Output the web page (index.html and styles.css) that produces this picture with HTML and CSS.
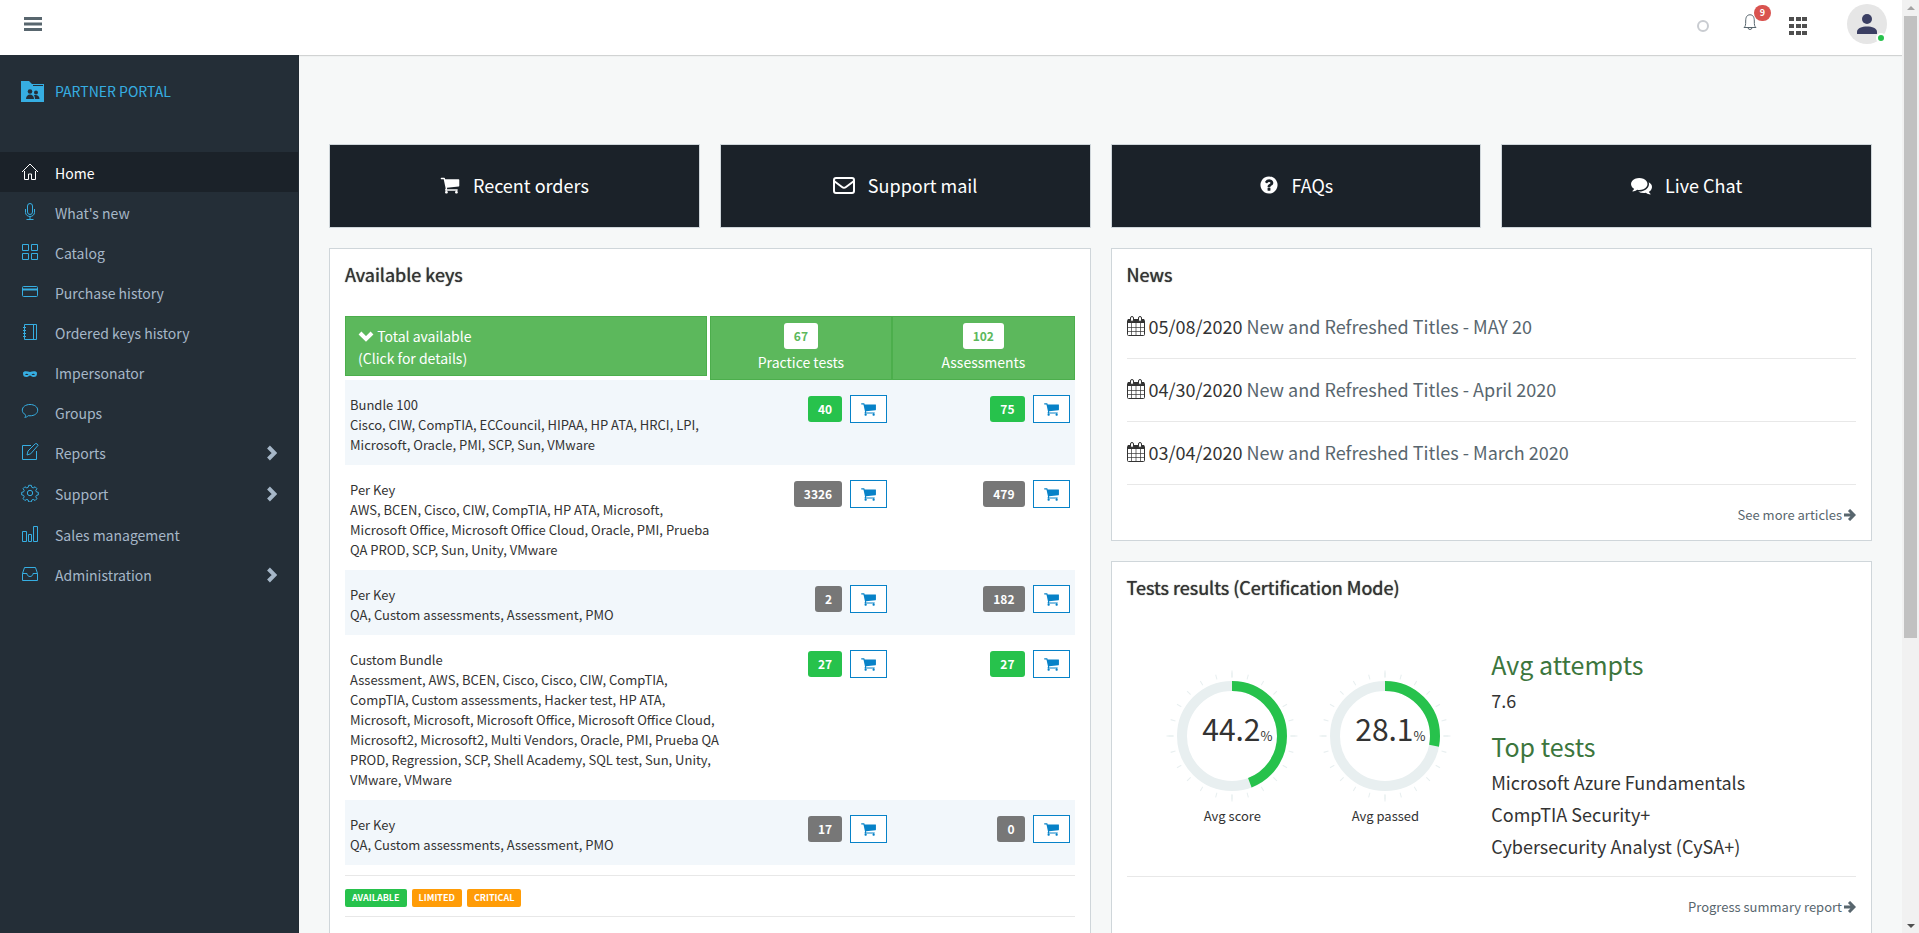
FILE: index.html
```html
<!DOCTYPE html>
<html lang="en">

<head>
    <meta charset="UTF-8">
    <meta name="viewport" content="width=device-width, initial-scale=1.0">
    <title>Partner Portal</title>
    <link rel="stylesheet" href="styles.css">
</head>

<body>
    <!-- shared icons -->
    <svg class="sprite" aria-hidden="true">
        <symbol id="cart" viewBox="0 0 1664 1792">
            <path d="M640 1536q0 52-38 90t-90 38-90-38-38-90 38-90 90-38 90 38 38 90zm896 0q0 52-38 90t-90 38-90-38-38-90 38-90 90-38 90 38 38 90zm128-1088v512q0 24-16.5 42.5t-40.5 21.5l-1044 122q13 60 13 70 0 16-24 64h920q26 0 45 19t19 45-19 45-45 19h-1024q-26 0-45-19t-19-45q0-11 8-31.5t16-36 21.5-40 15.5-29.5l-177-823h-204q-26 0-45-19t-19-45 19-45 45-19h256q16 0 28.5 6.5t19.5 15.5 13 24.5 8 26 5.5 29.5 4.5 26h1201q26 0 45 19t19 45z" />
        </symbol>
        <symbol id="calendar" viewBox="0 0 18 20">
            <path d="M1 3h16v4H1z" />
            <path d="M.5 4.500q0-1 1-1h15q1 0 1 1v14q0 1-1 1h-15q-1 0-1-1z" fill="none" stroke="currentColor" />
            <path d="M4.500 7v12M9 7v12M13.500 7v12M1 11.500h16M1 15.500h16" fill="none" stroke="currentColor" stroke-width=".7" />
            <rect x="3.500" y=".5" width="3" height="5" rx="1.500" fill="#fff" stroke="currentColor" />
            <rect x="11.500" y=".5" width="3" height="5" rx="1.500" fill="#fff" stroke="currentColor" />
        </symbol>
        <symbol id="chevron" viewBox="0 0 10 16">
            <path d="M1.500 2l6 6-6 6" fill="none" stroke="currentColor" stroke-width="4" />
        </symbol>
        <symbol id="arrow" viewBox="0 0 12 12">
            <path d="M0 6h10M5 1l5 5-5 5" fill="none" stroke="currentColor" stroke-width="3" />
        </symbol>
    </svg>

    <div class="app">
        <header class="topbar">
            <button class="icon-btn" aria-label="Toggle menu">
                <svg width="18" height="14" viewBox="0 0 18 14"><path d="M0 0h18v3H0zm0 5.500h18v3H0zM0 11h18v3H0z" fill="#58666e" /></svg>
            </button>
            <div class="topbar-right">
                <span class="status-ring"></span>
                <button class="icon-btn bell" aria-label="Notifications">
                    <svg width="14" height="16" viewBox="0 0 14 16" fill="none" stroke="#58666e"><path d="M1 13.500c1.500-1.200 1.700-2.500 1.700-6.500C2.700 3 4 .8 7 .8S11.300 3 11.300 7c0 4 .2 5.300 1.700 6.500zM5 13.500a2 2 0 0 0 4 0" /></svg>
                    <span class="count">9</span>
                </button>
                <button class="icon-btn apps" aria-label="Applications">
                    <svg width="18" height="18" viewBox="0 0 18 18" fill="#4f4f4f"><path d="M0 0h5v4H0zM7 0h5v4H7zM13 0h5v4h-5zM0 7h5v4H0zM7 7h5v4H7zM13 7h5v4h-5zM0 14h5v4H0zM7 14h5v4H7zM13 14h5v4h-5z" /></svg>
                </button>
                <button class="icon-btn avatar" aria-label="Account">
                    <svg width="40" height="40" viewBox="0 0 40 40"><circle cx="20" cy="20" r="20" fill="#e6e6e6" /><circle cx="20" cy="15" r="5" fill="#3b3f63" /><path d="M10 30v-2c0-4 5-5.500 10-5.500s10 1.500 10 5.500v2z" fill="#3b3f63" /></svg>
                    <span class="online"></span>
                </button>
            </div>
        </header>

        <div class="page">
            <nav class="sidebar">
                <a class="brand" href="#">
                    <svg width="23" height="21" viewBox="0 0 23 21"><path d="M0 0h8l3 3h12v18H0z" fill="#36aee2" /><path d="M12 4h10v1H12z" fill="#242e37" /><g fill="#242e37"><circle cx="9" cy="10.500" r="2.300" /><circle cx="15" cy="11.500" r="2" /><path d="M5 18c0-3 2-4.500 4-4.500s4 1.500 4 4.500zM14 18c0-1.800-.5-3-1.200-3.700 2.600-1.200 5.700.3 5.700 3.700z" /></g></svg>
                    PARTNER PORTAL
                </a>
                <ul class="menu">
                    <li class="active"><a href="#"><svg class="ico" viewBox="0 0 18 18"><path d="M1 9l8-8 8 8M3.500 8v8.500h4V11h3v5.500h4V8" /></svg>Home</a></li>
                    <li><a href="#"><svg class="ico" viewBox="0 0 18 18"><rect x="6.500" y=".5" width="5" height="11" rx="2.500" /><path d="M4.500 6v3.500a4.500 4 0 0 0 9 0V6M9 13.500v3M5.500 16.500h7" /></svg>What's new</a></li>
                    <li><a href="#"><svg class="ico" viewBox="0 0 18 18"><path d="M1.500 1.500h6v6h-6zM10.500 1.500h6v6h-6zM1.500 10.500h6v6h-6zM10.500 10.500h6v6h-6z" /></svg>Catalog</a></li>
                    <li><a href="#"><svg class="ico" viewBox="0 0 18 18"><rect x="1.500" y="3.500" width="15" height="10" rx="1" /><path d="M1.500 6.500h15" stroke-width="2" /></svg>Purchase history</a></li>
                    <li><a href="#"><svg class="ico" viewBox="0 0 18 18"><path d="M3.500 1.500h12v15h-12zM12.500 1.500v15M2 4.500h3M2 7.500h3M2 10.500h3M2 13.500h3" /></svg>Ordered keys history</a></li>
                    <li><a href="#"><svg class="ico" viewBox="0 0 18 18"><path d="M2 10c0-2 4-2 7-1 3-1 7-1 7 1 0 3-1 4-3.500 4-2 0-2.500-1.500-3.500-1.500S7.500 14 5.500 14C3 14 2 13 2 10z" fill="#36aee2" stroke="none" /><path d="M4 11.500q1.500-1.500 3.500 0-1.500 1-3.500 0zM10.500 11.500q2-1.500 3.500 0-2 1-3.500 0z" fill="#242e37" stroke="none" /></svg>Impersonator</a></li>
                    <li><a href="#"><svg class="ico" viewBox="0 0 18 18"><path d="M4.500 11.800C2.500 10.700 1.300 9 1.300 7.200c0-3.400 3.400-5.700 7.700-5.700s7.700 2.300 7.700 5.700-3.400 5.600-7.700 5.600c-.6 0-1.200 0-1.800-.1C6 13.900 5 14.300 3.800 14.400c.7-.8 1-1.700.7-2.600z" /></svg>Groups</a></li>
                    <li class="has-sub"><a href="#"><svg class="ico" viewBox="0 0 18 18"><path d="M10 2.500H1.500v14h14V8M6 12l1-4 7.300-7.300q2-.7 2.800 1.600L9.700 10.800z" /></svg>Reports<svg class="chev"><use href="#chevron" /></svg></a></li>
                    <li class="has-sub"><a href="#"><svg class="ico" viewBox="0 0 18 18"><circle cx="9" cy="9" r="2.700" /><path d="M7.700 1.300h2.600l.5 2 1.400.6 1.900-1.100 1.800 1.800-1.100 1.900.6 1.400 1.900.4v2.600l-1.900.5-.6 1.400 1.100 1.900-1.800 1.800-1.900-1.100-1.400.6-.5 1.900H7.700l-.5-1.900-1.400-.6-1.900 1.100-1.800-1.800 1.100-1.900-.6-1.400-1.900-.5V8.300l1.900-.4.600-1.400-1.100-1.900 1.800-1.800 1.900 1.100 1.400-.6z" /></svg>Support<svg class="chev"><use href="#chevron" /></svg></a></li>
                    <li><a href="#"><svg class="ico" viewBox="0 0 18 18"><path d="M1.500 6.500h4v10h-4zM7.500 9.500h3v7h-3zM12.500 1.500h4v15h-4z" /></svg>Sales management</a></li>
                    <li class="has-sub"><a href="#"><svg class="ico" viewBox="0 0 18 18"><path d="M3.500 2.500h11l2 6v7h-15v-7zM1.500 8.500h4.500c0 4 6 4 6 0h4.500" /></svg>Administration<svg class="chev"><use href="#chevron" /></svg></a></li>
                </ul>
            </nav>

            <main class="content">
                <div class="tiles">
                    <a class="tile" href="#"><svg width="20" height="20"><use href="#cart" /></svg>Recent orders</a>
                    <a class="tile" href="#"><svg width="22" height="18" viewBox="0 0 22 18" fill="none" stroke="#fff" stroke-width="2"><rect x="1" y="2" width="20" height="15" rx="2" /><path d="M1 5l8 6q2 1.500 4 0l8-6" /></svg>Support mail</a>
                    <a class="tile" href="#"><svg width="20" height="20" viewBox="0 0 1792 1792"><path d="M1024 1376v-192q0-14-9-23t-23-9h-192q-14 0-23 9t-9 23v192q0 14 9 23t23 9h192q14 0 23-9t9-23zm256-672q0-88-55.500-163t-138.500-116-170-41q-243 0-371 213-15 24 8 42l132 100q7 6 19 6 16 0 25-12 53-68 86-92 34-24 86-24 48 0 85.500 26t37.500 59q0 38-20 61t-68 45q-63 28-115.500 86.500t-52.500 125.500v36q0 14 9 23t23 9h192q14 0 23-9t9-23q0-19 21.500-49.500t54.500-49.500q32-18 49-28.500t46-35 44.500-48 28-60.500 12.500-81zm384 192q0 209-103 385.500t-279.500 279.500-385.500 103-385.500-103-279.500-279.500-103-385.500 103-385.500 279.500-279.500 385.500-103 385.500 103 279.500 279.500 103 385.500z" /></svg>FAQs</a>
                    <a class="tile" href="#"><svg width="21" height="21" viewBox="0 0 1792 1792"><path d="M1408 768q0 139-94 257t-256.500 186.500-353.500 68.500q-86 0-176-16-124 88-278 128-36 9-86 16h-3q-11 0-20.500-8t-11.500-21q-1-3-1-6.500t.5-6.500 2-6l2.500-5 3.500-5.500 4-5 4.500-5 4-4.500q5-6 23-25t26-29.500 22.500-29 25-38.500 20.500-44q-124-72-195-177t-71-224q0-139 94-257t256.500-186.500 353.500-68.500 353.500 68.500 256.500 186.500 94 257zm384 256q0 120-71 224.500t-195 176.500q10 24 20.500 44t25 38.500 22.500 29 26 29.500 23 25q1 1 4 4.500t4.500 5 4 5 3.500 5.500l2.500 5 2 6 .5 6.500-1 6.500q-3 14-13 22t-22 7q-50-7-86-16-154-40-278-128-90 16-176 16-271 0-472-132 58 4 88 4 161 0 309-45t264-129q125-92 192-212t67-254q0-77-23-152 129 71 204 178t75 230z" /></svg>Live Chat</a>
                </div>

                <div class="panels">
                    <section class="panel keys">
                        <h2>Available keys</h2>
                        <table class="keys-table">
                            <thead>
                                <tr>
                                    <th class="total"><button><svg class="down" width="16" height="11" viewBox="0 0 16 11"><path d="M2 2l6 6 6-6" fill="none" stroke="#fff" stroke-width="4" /></svg> Total available<br>(Click for details)</button></th>
                                    <th><button><span class="badge white">67</span>Practice tests</button></th>
                                    <th><button><span class="badge white">102</span>Assessments</button></th>
                                </tr>
                            </thead>
                            <tbody>
                                <tr>
                                    <td>Bundle 100<br>Cisco, CIW, CompTIA, ECCouncil, HIPAA, HP ATA, HRCI, LPI,<br>Microsoft, Oracle, PMI, SCP, Sun, VMware</td>
                                    <td><div class="stock"><span class="badge green">40</span><button class="buy" aria-label="Buy"><svg><use href="#cart" /></svg></button></div></td>
                                    <td><div class="stock"><span class="badge green">75</span><button class="buy" aria-label="Buy"><svg><use href="#cart" /></svg></button></div></td>
                                </tr>
                                <tr>
                                    <td>Per Key<br>AWS, BCEN, Cisco, CIW, CompTIA, HP ATA, Microsoft,<br>Microsoft Office, Microsoft Office Cloud, Oracle, PMI, Prueba<br>QA PROD, SCP, Sun, Unity, VMware</td>
                                    <td><div class="stock"><span class="badge">3326</span><button class="buy" aria-label="Buy"><svg><use href="#cart" /></svg></button></div></td>
                                    <td><div class="stock"><span class="badge">479</span><button class="buy" aria-label="Buy"><svg><use href="#cart" /></svg></button></div></td>
                                </tr>
                                <tr>
                                    <td>Per Key<br>QA, Custom assessments, Assessment, PMO</td>
                                    <td><div class="stock"><span class="badge">2</span><button class="buy" aria-label="Buy"><svg><use href="#cart" /></svg></button></div></td>
                                    <td><div class="stock"><span class="badge">182</span><button class="buy" aria-label="Buy"><svg><use href="#cart" /></svg></button></div></td>
                                </tr>
                                <tr>
                                    <td>Custom Bundle<br>Assessment, AWS, BCEN, Cisco, Cisco, CIW, CompTIA,<br>CompTIA, Custom assessments, Hacker test, HP ATA,<br>Microsoft, Microsoft, Microsoft Office, Microsoft Office Cloud,<br>Microsoft2, Microsoft2, Multi Vendors, Oracle, PMI, Prueba QA<br>PROD, Regression, SCP, Shell Academy, SQL test, Sun, Unity,<br>VMware, VMware</td>
                                    <td><div class="stock"><span class="badge green">27</span><button class="buy" aria-label="Buy"><svg><use href="#cart" /></svg></button></div></td>
                                    <td><div class="stock"><span class="badge green">27</span><button class="buy" aria-label="Buy"><svg><use href="#cart" /></svg></button></div></td>
                                </tr>
                                <tr>
                                    <td>Per Key<br>QA, Custom assessments, Assessment, PMO</td>
                                    <td><div class="stock"><span class="badge">17</span><button class="buy" aria-label="Buy"><svg><use href="#cart" /></svg></button></div></td>
                                    <td><div class="stock"><span class="badge">0</span><button class="buy" aria-label="Buy"><svg><use href="#cart" /></svg></button></div></td>
                                </tr>
                            </tbody>
                        </table>
                        <div class="legend">
                            <span class="tag green">AVAILABLE</span>
                            <span class="tag orange">LIMITED</span>
                            <span class="tag orange">CRITICAL</span>
                        </div>
                    </section>

                    <div class="column">
                        <section class="panel">
                            <h2>News</h2>
                            <ul class="news">
                                <li><svg width="18" height="20"><use href="#calendar" /></svg>05/08/2020 <a href="#">New and Refreshed Titles - MAY 20</a></li>
                                <li><svg width="18" height="20"><use href="#calendar" /></svg>04/30/2020 <a href="#">New and Refreshed Titles - April 2020</a></li>
                                <li><svg width="18" height="20"><use href="#calendar" /></svg>03/04/2020 <a href="#">New and Refreshed Titles - March 2020</a></li>
                            </ul>
                            <a class="more" href="#">See more articles<svg width="12" height="12"><use href="#arrow" /></svg></a>
                        </section>

                        <section class="panel results">
                            <h2>Tests results (Certification Mode)</h2>
                            <div class="stats">
                                <div class="gauges">
                                    <div class="gauge">
                                        <div class="dial">
                                            <svg width="132" height="132" viewBox="-66 -66 132 132" fill="none" stroke="#e8eff0">
                                                <circle r="61" stroke-width="5" pathLength="360" stroke-dasharray="1 14" stroke-dashoffset=".5" />
                                                <circle r="62" stroke-width="7" pathLength="360" stroke-dasharray="1 89" stroke-dashoffset=".5" />
                                                <circle r="50" stroke-width="10" />
                                                <circle r="50" stroke-width="10" stroke="#27c24c" pathLength="1000" stroke-dasharray="442 1000" transform="rotate(-90)" />
                                            </svg>
                                            <div class="value">44.2<small>%</small></div>
                                        </div>
                                        <p>Avg score</p>
                                    </div>
                                    <div class="gauge">
                                        <div class="dial">
                                            <svg width="132" height="132" viewBox="-66 -66 132 132" fill="none" stroke="#e8eff0">
                                                <circle r="61" stroke-width="5" pathLength="360" stroke-dasharray="1 14" stroke-dashoffset=".5" />
                                                <circle r="62" stroke-width="7" pathLength="360" stroke-dasharray="1 89" stroke-dashoffset=".5" />
                                                <circle r="50" stroke-width="10" />
                                                <circle r="50" stroke-width="10" stroke="#27c24c" pathLength="1000" stroke-dasharray="281 1000" transform="rotate(-90)" />
                                            </svg>
                                            <div class="value">28.1<small>%</small></div>
                                        </div>
                                        <p>Avg passed</p>
                                    </div>
                                </div>
                                <div class="summary">
                                    <h3>Avg attempts</h3>
                                    <p>7.6</p>
                                    <h3>Top tests</h3>
                                    <p>Microsoft Azure Fundamentals</p>
                                    <p>CompTIA Security+</p>
                                    <p>Cybersecurity Analyst (CySA+)</p>
                                </div>
                            </div>
                            <a class="more" href="#">Progress summary report<svg width="12" height="12"><use href="#arrow" /></svg></a>
                        </section>
                    </div>
                </div>
            </main>
        </div>
    </div>

    <div class="scrollbar" aria-hidden="true">
        <svg width="17" height="16" viewBox="0 0 17 16"><path d="M5 10l4-4 4 4z" fill="#a3a3a3" /></svg>
        <div class="track"><div class="thumb"></div></div>
        <svg width="17" height="16" viewBox="0 0 17 16"><path d="M5 7l4 4 4-4z" fill="#505050" /></svg>
    </div>
</body>

</html>
```

FILE: styles.css
```css
/* Basic reset */
* {
    margin: 0;
    padding: 0;
    box-sizing: border-box;
}

body {
    display: flex;
    height: 100vh;
    overflow: hidden;
    font-family: "Source Sans Pro", "Noto Sans CJK SC", sans-serif;
    font-size: 13px;
    line-height: 20px;
    color: #333;
    background-color: #f6f8f8;
}

a {
    color: inherit;
    text-decoration: none;
}

button {
    font: inherit;
    cursor: pointer;
}

ul {
    list-style: none;
}

.sprite {
    position: absolute;
    width: 0;
    height: 0;
}

.app {
    flex: 1;
    min-width: 0;
    display: flex;
    flex-direction: column;
}

/* Top bar */
.topbar {
    flex: none;
    display: flex;
    justify-content: space-between;
    height: 55px;
    padding: 4px 15px 0 24px;
    background-color: #fff;
    box-shadow: 0 1px 1px rgba(0, 0, 0, 0.15);
}

.icon-btn {
    position: relative;
    display: flex;
    align-items: center;
    height: 40px;
    border: none;
    background: none;
}

.topbar-right {
    display: flex;
    align-items: center;
    height: 40px;
}

.status-ring {
    width: 12px;
    height: 12px;
    margin: 4px 34px 0 0;
    border: 2px solid #c9ccd1;
    border-radius: 50%;
}

.bell {
    margin-right: 32px;
    padding-bottom: 4px;
}

.count {
    position: absolute;
    top: 1px;
    left: 11px;
    width: 17px;
    height: 16px;
    border-radius: 8px;
    background-color: #d9534f;
    color: #fff;
    font-size: 9px;
    font-weight: bold;
    line-height: 16px;
    text-align: center;
}

.apps {
    margin-right: 40px;
    padding-top: 4px;
}

.online {
    position: absolute;
    right: 1px;
    bottom: 1px;
    width: 10px;
    height: 10px;
    border: 2px solid #fff;
    border-radius: 50%;
    background-color: #27c24c;
}

.page {
    flex: 1;
    min-height: 0;
    display: flex;
}

/* Sidebar */
.sidebar {
    flex: none;
    width: 299px;
    border-right: 1px solid #222b33;
    background-color: #242e37;
    z-index: 1;
    font-size: 14px;
    color: #a6b7c8;
}

.brand {
    display: flex;
    align-items: center;
    gap: 11px;
    height: 97px;
    padding: 0 0 25px 21px;
    color: #36aee2;
}

.menu a {
    display: flex;
    align-items: center;
    height: 40px;
    padding: 1px 21px 0;
}

.menu .has-sub a {
    height: 41px;
}

.menu .active a {
    background-color: #1b2229;
    color: #fff;
}

.ico {
    width: 18px;
    height: 18px;
    margin: 0 16px 2px 0;
    fill: none;
    stroke: #36aee2;
}

.active .ico {
    stroke: #fff;
}

.chev {
    width: 10px;
    height: 16px;
    margin-left: auto;
}

/* Content */
.content {
    flex: 1;
    min-width: 0;
    padding: 89px 30px 20px;
    overflow: hidden;
}

.tiles {
    display: grid;
    grid-template-columns: repeat(4, 1fr);
    gap: 20px;
    margin-bottom: 20px;
}

.tile {
    display: flex;
    align-items: center;
    justify-content: center;
    gap: 13px;
    height: 84px;
    padding-bottom: 2px;
    border: 1px solid #cfd6da;
    background-color: #1b2229;
    color: #fff;
    font-size: 18px;
    fill: #fff;
}

.panels {
    display: grid;
    grid-template-columns: 1fr 1fr;
    gap: 20px;
}

.column {
    display: flex;
    flex-direction: column;
    gap: 20px;
}

.panel {
    padding: 15px;
    border: 1px solid #cfd6da;
    background-color: #fff;
}

.panel h2 {
    padding-bottom: 2px;
    font-size: 18px;
    font-weight: normal;
    line-height: 20px;
    text-shadow: 0 0 1px #333;
}

/* Available keys */
.keys {
    padding-bottom: 60px;
}

.keys-table {
    width: 100%;
    margin-top: 30px;
    border-collapse: collapse;
    table-layout: fixed;
}

.keys-table th {
    width: 25%;
    height: 64px;
    vertical-align: top;
    font-weight: normal;
}

.keys-table .total {
    width: 50%;
    padding-right: 3px;
}

.keys-table th button {
    display: block;
    width: 100%;
    height: 64px;
    border: 1px solid #4cae4c;
    background-color: #5cb85c;
    color: #fff;
    font-size: 14px;
    line-height: 22px;
}

.keys-table .total button {
    height: 60px;
    padding: 2px 0 0 12px;
    text-align: left;
}

.keys-table th .badge {
    display: block;
    width: fit-content;
    margin: 0 auto 2px;
}

.keys-table td {
    padding: 15px 0 10px 5px;
    vertical-align: top;
    white-space: nowrap;
}

.keys-table td + td {
    padding: 15px 5px 10px;
}

.keys-table tbody tr:nth-child(odd) {
    background-color: #f2f7fb;
}

.stock {
    display: flex;
    align-items: center;
    justify-content: flex-end;
    gap: 8px;
}

.badge {
    padding: 0 10px;
    border-radius: 3px;
    background-color: #777;
    color: #fff;
    font-size: 12px;
    font-weight: bold;
    line-height: 26px;
}

.badge.white {
    background-color: #fff;
    color: #5cb85c;
}

.green,
.badge.green {
    background-color: #27c24c;
}

.orange {
    background-color: #ff9c07;
}

.buy {
    display: flex;
    align-items: center;
    justify-content: center;
    width: 37px;
    height: 28px;
    border: 1px solid #0782c8;
    background-color: #fff;
    fill: #0782c8;
}

.buy svg {
    width: 15px;
    height: 16px;
}

.legend {
    display: flex;
    gap: 5px;
    margin-top: 10px;
    padding: 13px 0 9px;
    border-top: 1px solid #e8e8e8;
    border-bottom: 1px solid #e8e8e8;
}

.tag {
    padding: 0 7px;
    border-radius: 2px;
    color: #fff;
    font-size: 9px;
    font-weight: bold;
    line-height: 18px;
}

/* News */
.news {
    margin-top: 10px;
    font-size: 18px;
}

.news li {
    display: flex;
    align-items: center;
    gap: 4px;
    height: 63px;
    padding-bottom: 2px;
    border-bottom: 1px solid #e8e8e8;
}

.news svg {
    fill: #333;
}

.news a,
.more {
    color: #58666e;
}

.more {
    display: flex;
    align-items: center;
    justify-content: flex-end;
    gap: 2px;
    padding-top: 20px;
}

/* Tests results */
.results {
    padding-bottom: 40px;
}

.stats {
    display: flex;
    height: 278px;
    padding-top: 45px;
    border-bottom: 1px solid #e8e8e8;
}

.gauges {
    flex: 1;
    display: flex;
    justify-content: center;
    gap: 21px;
    padding-top: 26px;
}

.gauge {
    text-align: center;
}

.dial {
    position: relative;
    height: 132px;
    margin-bottom: 4px;
}

.value {
    position: absolute;
    top: 38px;
    left: 0;
    width: 100%;
    padding-left: 10px;
    font-size: 30px;
    line-height: 40px;
}

.value small {
    font-size: 13px;
}

.summary {
    flex: 1;
    font-size: 18px;
    line-height: 32px;
}

.summary h3 {
    color: #3c763d;
    font-size: 25px;
    font-weight: normal;
    line-height: 40px;
}

.summary p + h3 {
    margin-top: 10px;
}

/* Scroll bar */
.scrollbar {
    flex: none;
    display: flex;
    flex-direction: column;
    width: 17px;
    background-color: #f1f1f1;
}

.track {
    flex: 1;
    padding: 0 2px;
}

.thumb {
    height: 69%;
    background-color: #c1c1c1;
}
```
